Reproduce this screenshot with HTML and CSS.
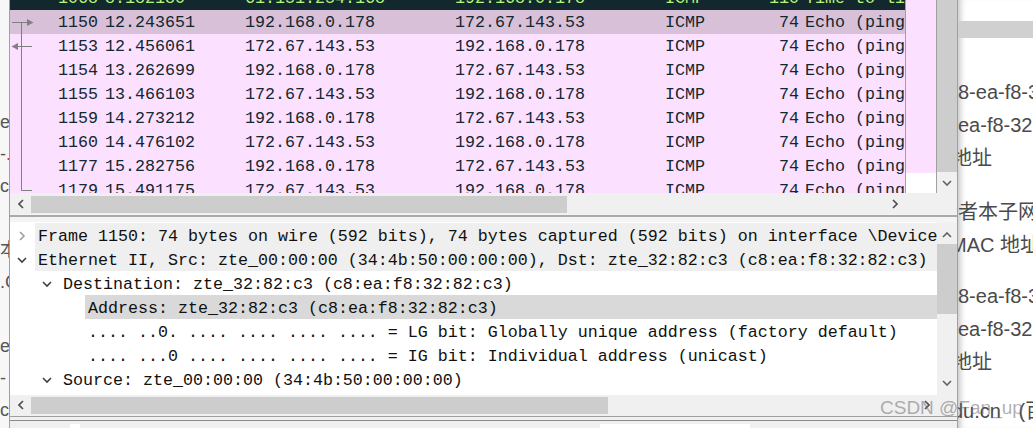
FILE: index.html
```html
<!DOCTYPE html>
<html>
<head>
<meta charset="utf-8">
<link rel="stylesheet" href="styles.css">
</head>
<body>
<div class="screen">
  <div class="bg-left">
    <div class="bl-line">e</div>
    <div class="bl-line">-<span class="red">.</span></div>
    <div class="bl-line">cl</div>
    <div class="bl-line"></div>
    <div class="bl-line">本</div>
    <div class="bl-line">.C</div>
    <div class="bl-line"></div>
    <div class="bl-line">e</div>
    <div class="bl-line">-</div>
    <div class="bl-line">cl</div>
  </div>

  <div class="ws">
    <div class="plist-body">
      <div class="rows">
        <div class="rows-inner">
          <div class="row err"><div class="c-no"><span class="rel"></span><span>1068</span></div><span class="c-time">8.182180</span><span class="c-src">61.151.254.168</span><span class="c-dst">192.168.0.178</span><span class="c-proto">ICMP</span><span class="c-len">110</span><span class="c-info">Time-to-live exceeded (Time to live exceeded in transit)</span></div>
          <div class="row sel"><div class="c-no"><svg class="rel" viewBox="0 0 26 24"><path d="M11.5 12.5V24M2 12.5H18" stroke="#808080" fill="none"/><path d="M17 9L23.5 12.5L17 16Z" fill="#808080"/></svg><span>1150</span></div><span class="c-time">12.243651</span><span class="c-src">192.168.0.178</span><span class="c-dst">172.67.143.53</span><span class="c-proto">ICMP</span><span class="c-len">74</span><span class="c-info">Echo (ping) request  id=0x0001, seq=53/13568, ttl=1 (no response found!)</span></div>
          <div class="row"><div class="c-no"><svg class="rel" viewBox="0 0 26 24"><path d="M11.5 0V24M7 12.5H22" stroke="#808080" fill="none"/><path d="M8 9L1.5 12.5L8 16Z" fill="#808080"/></svg><span>1153</span></div><span class="c-time">12.456061</span><span class="c-src">172.67.143.53</span><span class="c-dst">192.168.0.178</span><span class="c-proto">ICMP</span><span class="c-len">74</span><span class="c-info">Echo (ping) reply    id=0x0001, seq=53/13568, ttl=56</span></div>
          <div class="row"><div class="c-no"><svg class="rel" viewBox="0 0 26 24"><path d="M11.5 0V24" stroke="#808080" fill="none"/></svg><span>1154</span></div><span class="c-time">13.262699</span><span class="c-src">192.168.0.178</span><span class="c-dst">172.67.143.53</span><span class="c-proto">ICMP</span><span class="c-len">74</span><span class="c-info">Echo (ping) request  id=0x0001, seq=54/13824, ttl=2</span></div>
          <div class="row"><div class="c-no"><svg class="rel" viewBox="0 0 26 24"><path d="M11.5 0V24" stroke="#808080" fill="none"/></svg><span>1155</span></div><span class="c-time">13.466103</span><span class="c-src">172.67.143.53</span><span class="c-dst">192.168.0.178</span><span class="c-proto">ICMP</span><span class="c-len">74</span><span class="c-info">Echo (ping) reply    id=0x0001, seq=54/13824, ttl=56</span></div>
          <div class="row"><div class="c-no"><svg class="rel" viewBox="0 0 26 24"><path d="M11.5 0V24" stroke="#808080" fill="none"/></svg><span>1159</span></div><span class="c-time">14.273212</span><span class="c-src">192.168.0.178</span><span class="c-dst">172.67.143.53</span><span class="c-proto">ICMP</span><span class="c-len">74</span><span class="c-info">Echo (ping) request  id=0x0001, seq=55/14080, ttl=3</span></div>
          <div class="row"><div class="c-no"><svg class="rel" viewBox="0 0 26 24"><path d="M11.5 0V24" stroke="#808080" fill="none"/></svg><span>1160</span></div><span class="c-time">14.476102</span><span class="c-src">172.67.143.53</span><span class="c-dst">192.168.0.178</span><span class="c-proto">ICMP</span><span class="c-len">74</span><span class="c-info">Echo (ping) reply    id=0x0001, seq=55/14080, ttl=56</span></div>
          <div class="row"><div class="c-no"><svg class="rel" viewBox="0 0 26 24"><path d="M11.5 0V24" stroke="#808080" fill="none"/></svg><span>1177</span></div><span class="c-time">15.282756</span><span class="c-src">192.168.0.178</span><span class="c-dst">172.67.143.53</span><span class="c-proto">ICMP</span><span class="c-len">74</span><span class="c-info">Echo (ping) request  id=0x0001, seq=56/14336, ttl=4</span></div>
          <div class="row"><div class="c-no"><svg class="rel" viewBox="0 0 26 24"><path d="M11.5 0V12.5H22" stroke="#808080" fill="none"/></svg><span>1179</span></div><span class="c-time">15.491175</span><span class="c-src">172.67.143.53</span><span class="c-dst">192.168.0.178</span><span class="c-proto">ICMP</span><span class="c-len">74</span><span class="c-info">Echo (ping) reply    id=0x0001, seq=56/14336, ttl=56</span></div>
        </div>
      </div>
      <div class="minimap"></div>
      <div class="vscroll plist-vs">
        <div class="vthumb plist-thumb"></div>
        <svg class="chev plist-down" viewBox="0 0 10 6"><path d="M1 1L5 5L9 1" /></svg>
      </div>
    </div>
    <div class="hrow">
      <div class="hscroll plist-hs">
        <div class="hbtn"><svg class="chev-h" viewBox="0 0 6 10"><path d="M5 1L1 5L5 9"/></svg></div>
        <div class="hthumb plist-hthumb"></div>
        <div class="hspace"></div>
        <div class="hbtn"><svg class="chev-h" viewBox="0 0 6 10"><path d="M1 1L5 5L1 9"/></svg></div>
      </div>
      <div class="corner plist-corner"></div>
    </div>

    <div class="splitter"><div class="split-line"></div></div>

    <div class="tree-body">
      <div class="tree">
        <div class="trow top">
          <span class="tarrow"><svg class="exp closed" viewBox="0 0 10 10"><path d="M3 1L7 5L3 9"/></svg></span>
          <span class="ttext">Frame 1150: 74 bytes on wire (592 bits), 74 bytes captured (592 bits) on interface \Device\NPF_{6A2D1F0C-8E2B-4C1A-9F3D-2B7E5C8A1D40}, id 0</span>
        </div>
        <div class="trow top">
          <span class="tarrow"><svg class="exp open" viewBox="0 0 10 10"><path d="M1 3L5 7L9 3"/></svg></span>
          <span class="ttext">Ethernet II, Src: zte_00:00:00 (34:4b:50:00:00:00), Dst: zte_32:82:c3 (c8:ea:f8:32:82:c3)</span>
        </div>
        <div class="trow">
          <span class="indent"></span>
          <span class="tarrow"><svg class="exp open" viewBox="0 0 10 10"><path d="M1 3L5 7L9 3"/></svg></span>
          <span class="ttext">Destination: zte_32:82:c3 (c8:ea:f8:32:82:c3)</span>
        </div>
        <div class="trow sel">
          <span class="indent"></span><span class="indent"></span>
          <span class="tarrow"></span>
          <span class="ttext">Address: zte_32:82:c3 (c8:ea:f8:32:82:c3)</span>
        </div>
        <div class="trow">
          <span class="indent"></span><span class="indent"></span>
          <span class="tarrow"></span>
          <span class="ttext">.... ..0. .... .... .... .... = LG bit: Globally unique address (factory default)</span>
        </div>
        <div class="trow">
          <span class="indent"></span><span class="indent"></span>
          <span class="tarrow"></span>
          <span class="ttext">.... ...0 .... .... .... .... = IG bit: Individual address (unicast)</span>
        </div>
        <div class="trow">
          <span class="indent"></span>
          <span class="tarrow"><svg class="exp open" viewBox="0 0 10 10"><path d="M1 3L5 7L9 3"/></svg></span>
          <span class="ttext">Source: zte_00:00:00 (34:4b:50:00:00:00)</span>
        </div>
      </div>
      <div class="vscroll tree-vs">
        <svg class="chev tree-up" viewBox="0 0 10 6"><path d="M1 5L5 1L9 5" /></svg>
        <div class="vthumb tree-thumb"></div>
        <div class="vspace"></div>
        <svg class="chev tree-down" viewBox="0 0 10 6"><path d="M1 1L5 5L9 1" /></svg>
      </div>
    </div>
    <div class="hrow tree-hrow">
      <div class="hscroll tree-hs">
        <div class="hbtn"><svg class="chev-h" viewBox="0 0 6 10"><path d="M5 1L1 5L5 9"/></svg></div>
        <div class="hthumb tree-hthumb"></div>
        <div class="hspace"></div>
        <div class="hbtn"><svg class="chev-h" viewBox="0 0 6 10"><path d="M1 1L5 5L1 9"/></svg></div>
      </div>
      <div class="corner tree-corner"></div>
    </div>

    <div class="status">
      <div class="s-line s1"></div>
      <div class="s-line s2"></div>
      <div class="s-bar"><span class="s-w1"></span><span class="s-w2"></span></div>
    </div>
  </div>

  <div class="page">
    <div class="page-top"></div>
    <div class="page-band"></div>
    <div class="page-text">
      <p class="g1"><span class="l">8-ea-f8-32-82-c3</span><span class="l">ea-f8-32-82-c3</span><span class="l cut">地址</span></p>
      <p class="g2"><span class="l">者本子网</span><span class="l mac">MAC 地址</span></p>
      <p class="g3"><span class="l">8-ea-f8-32-82-c3</span><span class="l">ea-f8-32-82-c3</span><span class="l cut">地址</span></p>
      <p class="g4"><span class="l cut2">du.cn (百度</span></p>
    </div>
  </div>

  <div class="watermark">CSDN @Fan_up</div>
</div>
</body>
</html>
```

FILE: styles.css
```css
* { box-sizing: border-box; margin: 0; padding: 0; }

body {
  width: 1033px;
  height: 428px;
  overflow: hidden;
  background: #ffffff;
  font-family: "Liberation Mono", "DejaVu Sans Mono", monospace;
}

.screen {
  position: relative;
  display: flex;
  width: 1033px;
  height: 428px;
}

/* background page strip on the left */
.bg-left {
  width: 9px;
  flex: none;
  overflow: hidden;
  background: #f7f7f7;
  padding-top: 106px;
  font: 18px "Liberation Sans", "Noto Sans CJK SC", sans-serif;
  color: #555555;
}
.bl-line {
  height: 32px;
  line-height: 32px;
  white-space: nowrap;
}
.red { color: #d33; }

/* wireshark window */
.ws {
  width: 949px;
  flex: none;
  display: flex;
  flex-direction: column;
  border-left: 1px solid #a0a0a0;
  border-right: 1px solid #a0a0a0;
  background: #ffffff;
}

.plist-body {
  display: flex;
  height: 193px;
}
.rows {
  width: 895px;
  flex: none;
  overflow: hidden;
  background: #ffffff;
}
.rows-inner { margin-top: -14px; }

.row {
  display: flex;
  height: 24px;
  padding-top: 1px;
  line-height: 24px;
  white-space: pre;
  font-size: 16.67px;
  color: #12272e;
  background: #fce0ff;
}
.row.err { background: #12272e; color: #b7f774; }
.row.sel { background: #d8c0d8; }

.c-no {
  width: 88px;
  flex: none;
  display: flex;
  justify-content: space-between;
  align-items: flex-start;
}
.rel { width: 26px; height: 24px; flex: none; display: block; margin-top: -1px; }
.c-time { width: 140px; margin-left: 7px; flex: none; }
.c-src { width: 210px; flex: none; }
.c-dst { width: 210px; flex: none; }
.c-proto { width: 84px; flex: none; }
.c-len { width: 50px; flex: none; text-align: right; }
.c-info { margin-left: 6px; }

.minimap {
  width: 32px;
  flex: none;
  border-left: 1px solid #a0a0a0;
  border-right: 1px solid #a0a0a0;
  background: linear-gradient(#fce0ff 0 173px, #ffffff 173px);
}

.vscroll {
  width: 20px;
  flex: none;
  display: flex;
  flex-direction: column;
  align-items: center;
  background: #f0f0f0;
}
.vthumb { width: 20px; background: #cdcdcd; flex: none; }
.plist-thumb { height: 172px; }
.chev {
  width: 10px;
  height: 6px;
  flex: none;
  fill: none;
  stroke: #606060;
  stroke-width: 1.6;
}
.plist-down { margin-top: 8px; }

.hrow { display: flex; height: 21px; }
.hscroll {
  display: flex;
  align-items: center;
  background: #f0f0f0;
  flex: none;
}
.plist-hs { width: 895px; }
.hbtn {
  width: 21px;
  height: 21px;
  flex: none;
  display: flex;
  align-items: center;
  justify-content: center;
}
.chev-h {
  width: 6px;
  height: 10px;
  fill: none;
  stroke: #505050;
  stroke-width: 1.7;
}
.hthumb { height: 17px; background: #cdcdcd; flex: none; margin-top: 1px; }
.plist-hthumb { width: 536px; }
.hspace { flex: 1; }
.corner { flex: 1; background: #f0f0f0; }

.splitter {
  height: 8px;
  background: #f4f4f4;
  padding-top: 1px;
}
.split-line { height: 2px; background: #a9a9a9; }

/* details tree */
.tree-body {
  display: flex;
  height: 173px;
}
.tree {
  width: 927px;
  flex: none;
  overflow: hidden;
  padding-top: 1px;
  background: #ffffff;
}
.trow {
  display: flex;
  height: 24px;
  line-height: 24px;
  white-space: pre;
  font-size: 16.67px;
  color: #111111;
}
.indent { width: 25px; flex: none; }
.tarrow {
  width: 25px;
  flex: none;
  display: flex;
  align-items: center;
  padding-left: 7px;
  padding-top: 1px;
}
.ttext { flex: 1; padding-left: 3px; padding-top: 2px; overflow: hidden; }
.trow.top .ttext { background: #efefef; }
.trow.sel .ttext { background: #d9d9d9; }
.exp {
  width: 10px;
  height: 10px;
  fill: none;
  stroke-width: 1.6;
}
.exp.closed { stroke: #a0a0a0; }
.exp.open { stroke: #404040; }

.tree-up { margin-top: 10px; }
.tree-thumb { height: 70px; margin-top: 6px; }
.vspace { flex: 1; }
.tree-down { margin-bottom: 9px; }

.tree-hrow { height: 19px; }
.tree-hs { width: 927px; }
.tree-hs .hbtn { height: 19px; }
.tree-hthumb { width: 577px; }

.status {
  flex: 1;
  background: #f0f0f0;
  display: flex;
  flex-direction: column;
}
.s-line { height: 1px; flex: none; }
.s1 { margin-top: 2px; background: #a0a0a0; }
.s2 { margin-top: 3px; background: #8c8c8c; }
.s-bar { flex: 1; display: flex; align-items: flex-end; }
.s-w1 { width: 10px; height: 4px; background: #fff; margin-left: 60px; }
.s-w2 { width: 150px; height: 4px; background: #fff; margin-left: 520px; }

/* right side web page */
.page {
  flex: 1;
  overflow: hidden;
  background: #ffffff;
  box-shadow: inset 7px 0 6px -5px rgba(0, 0, 0, 0.25);
  font: 20px "Liberation Sans", "Noto Sans CJK SC", sans-serif;
  color: #4a4a4a;
}
.page-top { height: 21px; }
.page-band { height: 17px; background: #d0d0d0; }
.page-text { padding-top: 38px; }
.page-text p { display: flex; flex-direction: column; }
.page-text .l { height: 33px; line-height: 33px; white-space: nowrap; }
.page-text .cut { margin-left: -6px; }
.page-text .mac { margin-left: -8px; }
.page-text .cut2 { margin-left: -6px; word-spacing: 12px; }
.g2 { margin-top: 21px; }
.g3 { margin-top: 18px; }
.g4 { margin-top: 16px; }

.watermark {
  position: absolute;
  left: 880px;
  top: 397px;
  font: 19px "Liberation Sans", sans-serif;
  color: rgba(110, 110, 110, 0.55);
  white-space: nowrap;
}
```
